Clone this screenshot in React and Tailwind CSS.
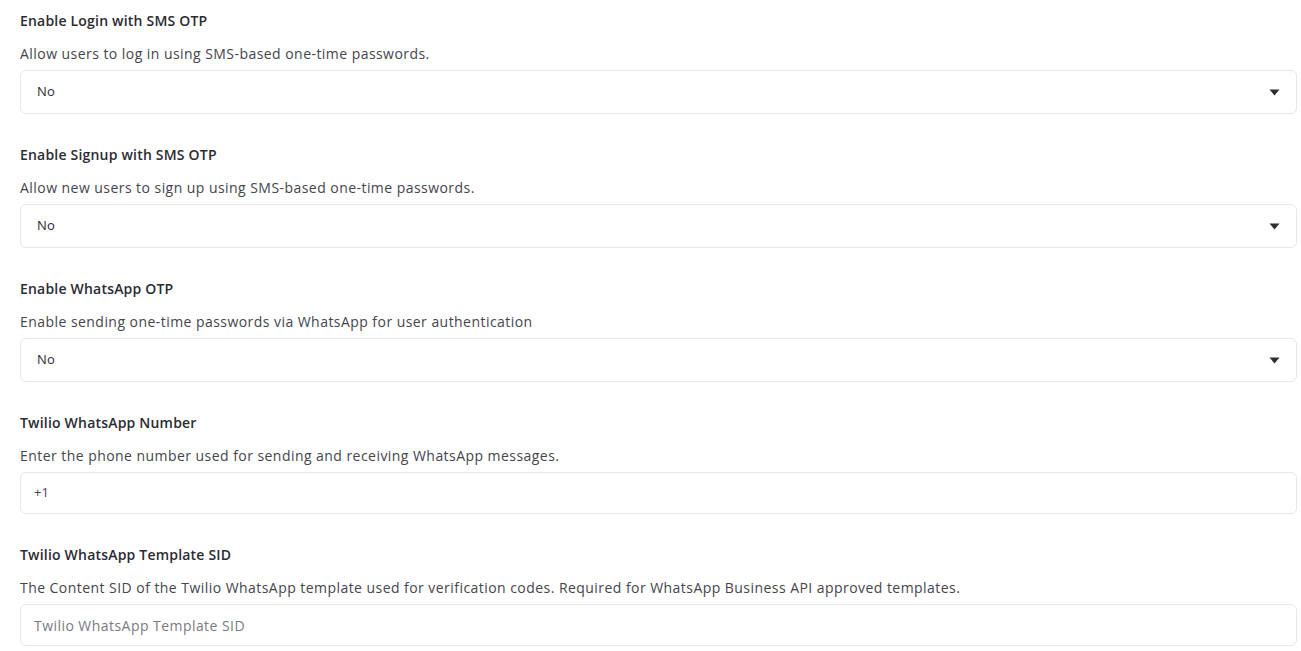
import React from 'react';

const fields = [
    {
        label: 'Enable Login with SMS OTP',
        help: 'Allow users to log in using SMS-based one-time passwords.',
        type: 'select',
        value: 'No',
    },
    {
        label: 'Enable Signup with SMS OTP',
        help: 'Allow new users to sign up using SMS-based one-time passwords.',
        type: 'select',
        value: 'No',
    },
    {
        label: 'Enable WhatsApp OTP',
        help: 'Enable sending one-time passwords via WhatsApp for user authentication',
        type: 'select',
        value: 'No',
    },
    {
        label: 'Twilio WhatsApp Number',
        help: 'Enter the phone number used for sending and receiving WhatsApp messages.',
        type: 'text',
        value: '+1',
    },
    {
        label: 'Twilio WhatsApp Template SID',
        help: 'The Content SID of the Twilio WhatsApp template used for verification codes. Required for WhatsApp Business API approved templates.',
        type: 'text',
        value: '',
        placeholder: 'Twilio WhatsApp Template SID',
    },
];

function Caret() {
    return (
        <svg width="11" height="7" viewBox="0 0 11 7" className="shrink-0">
            <path d="M0.5 0.5 H10.5 L5.5 6.5 Z" fill="#2f2f33" />
        </svg>
    );
}

function Field({ field }) {
    return (
        <div className="flex flex-col">
            <label className="text-[14px] leading-5 font-semibold tracking-[0.2px] text-[#2b2b33]">{field.label}</label>
            <p className="mt-[13px] text-[14px] leading-5 tracking-[0.45px] text-[#45454d]">{field.help}</p>
            {field.type === 'select' ? (
                <div className="mt-[6px] h-11 flex items-center justify-between rounded-md border border-[#e6e7ea] bg-white pl-4 pr-4">
                    <span className="text-[13px] font-medium tracking-[0.3px] text-[#2b2b33]">{field.value}</span>
                    <Caret />
                </div>
            ) : (
                <div className="mt-[6px] h-[42px] flex items-center rounded-md border border-[#e6e7ea] bg-white px-[13px]">
                    {field.value ? (
                        <span className="text-[13px] text-[#45454d]">{field.value}</span>
                    ) : (
                        <span className="text-[14px] tracking-[0.45px] text-[#7a7a82]">{field.placeholder}</span>
                    )}
                </div>
            )}
        </div>
    );
}

export default function App() {
    return (
        <div
            className="min-h-screen bg-white pl-5 pr-1 pt-[11px] flex flex-col gap-[31px]"
            style={{ fontFamily: '"Open Sans", "Noto Sans", sans-serif' }}
        >
            {fields.map((f) => (
                <Field key={f.label} field={f} />
            ))}
        </div>
    );
}
